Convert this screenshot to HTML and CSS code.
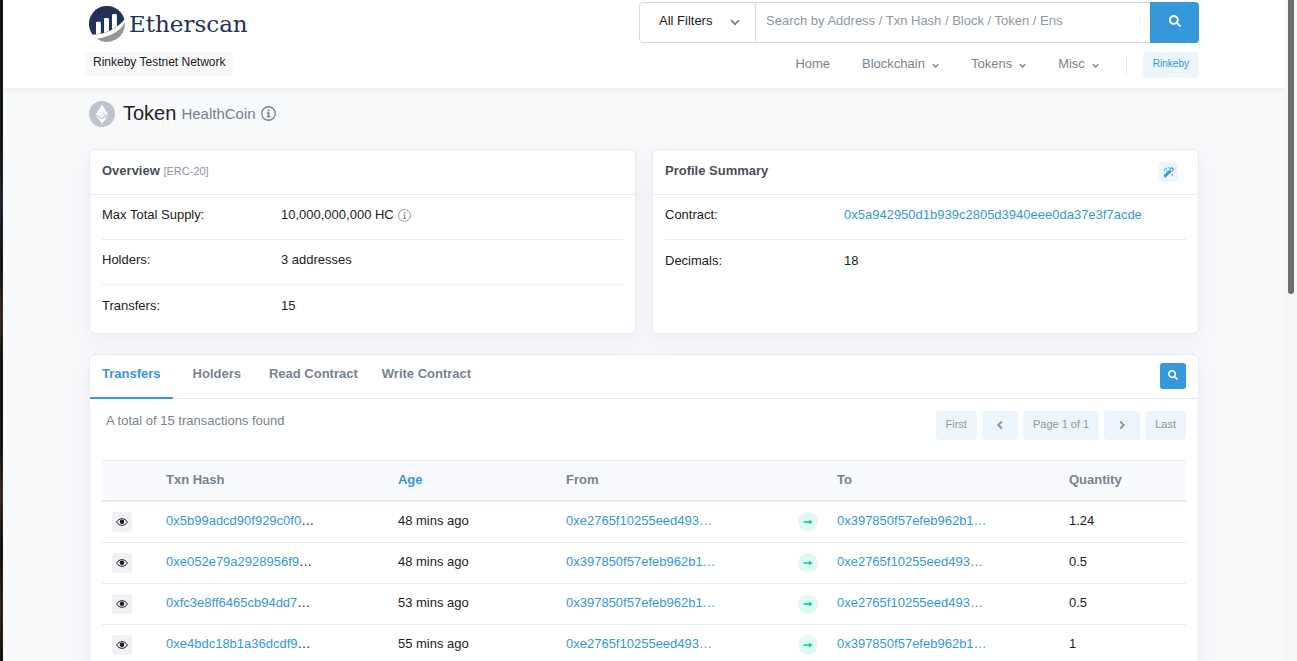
FILE: index.html
```html
<!DOCTYPE html>
<html lang="en">
  <head>
    <meta charset="UTF-8" />
    <meta name="viewport" content="width=device-width, initial-scale=1.0" />
    <title>HealthCoin (HC) Token Tracker | Etherscan</title>
    <link rel="stylesheet" href="styles.css">
  </head>
  <body>
    <!-- Shared icons -->
    <svg class="sprite" aria-hidden="true">
      <symbol id="i-search" viewBox="0 0 512 512">
        <path d="M505 442.700 405.300 343c-4.500-4.500-10.600-7-17-7H372c27.600-35.300 44-79.700 44-128C416 93.100 322.900 0 208 0S0 93.100 0 208s93.100 208 208 208c48.300 0 92.700-16.400 128-44v16.300c0 6.400 2.500 12.500 7 17l99.700 99.700c9.400 9.400 24.600 9.400 33.900 0l28.300-28.300c9.400-9.400 9.400-24.600.1-34zM208 336c-70.700 0-128-57.200-128-128 0-70.700 57.200-128 128-128 70.700 0 128 57.200 128 128 0 70.700-57.200 128-128 128z" />
      </symbol>
      <symbol id="i-down" viewBox="0 0 10 10">
        <path d="M1 3.200 5 7.200 9 3.200" fill="none" stroke="currentColor" stroke-width="1.800" />
      </symbol>
      <symbol id="i-info" viewBox="0 0 16 16">
        <circle cx="8" cy="8" r="7.200" fill="none" stroke="currentColor" stroke-width="1.400" />
        <path d="M7 3.600h2.100v2H7zM6 6.600h3.100v4.300h1v1.300H6v-1.300h1V7.900H6z" />
      </symbol>
      <symbol id="i-info-light" viewBox="0 0 16 16">
        <circle cx="8" cy="8" r="7.300" fill="none" stroke="currentColor" stroke-width="1.200" />
        <path d="M7.100 3.800h1.800v1.700H7.100zM6.200 6.700h2.700v4.500h1v1H6.200v-1h1V7.700h-1z" />
      </symbol>
      <symbol id="i-eye" viewBox="0 0 12 10">
        <path d="M.6 5C2 2.700 3.800 1.700 6 1.700S10 2.700 11.400 5C10 7.300 8.200 8.300 6 8.300S2 7.300.6 5z" fill="none" stroke="currentColor" stroke-width="1" />
        <circle cx="6" cy="4.800" r="2.300" />
      </symbol>
      <symbol id="i-arrow" viewBox="0 0 10 10">
        <path d="M.5 4.200h5.700V2.500L9.500 5 6.200 7.500V5.800H.5z" />
      </symbol>
    </svg>

    <div class="desktop-edge"></div>

    <div class="page">
      <header class="header">
        <div class="container header-inner">
          <div class="brand">
            <a class="logo" href="#">
              <svg class="logo-mark" viewBox="0 0 36 36" aria-hidden="true">
                <path d="M3.400 28.500A18 18 0 1 1 35.400 13.500C31 19 23 25 13 27.600c-3 .8-6.500 1.200-9.600.9z" fill="#21325b" />
                <path d="M7 28.400V17q0-1.300 1.300-1.300h2.300q1.300 0 1.300 1.300v10.600zM15 27V13.200q0-1.300 1.300-1.300h2.300q1.300 0 1.300 1.300V25zM23 23.500V9.400q0-1.300 1.300-1.300h2.300q1.300 0 1.300 1.300v11z" fill="#fff" />
                <path d="M7.400 32.500C20 31.500 31 25.500 35.900 16.500A18 18 0 0 1 7.400 32.500z" fill="#979695" />
              </svg>
              <span>Etherscan</span>
            </a>
            <span class="network">Rinkeby Testnet Network</span>
          </div>

          <div class="header-right">
            <form class="search">
              <div class="select-wrap">
                <select class="filter" aria-label="Search filter">
                  <option>All Filters</option>
                  <option>Addresses</option>
                  <option>Tokens</option>
                </select>
                <svg class="select-arrow"><use href="#i-down" /></svg>
              </div>
              <input class="search-input" type="text" aria-label="Search" placeholder="Search by Address / Txn Hash / Block / Token / Ens">
              <button class="search-btn" type="button" aria-label="Search"><svg><use href="#i-search" /></svg></button>
            </form>
            <nav class="nav">
              <a href="#">Home</a>
              <a href="#">Blockchain <svg><use href="#i-down" /></svg></a>
              <a href="#">Tokens <svg><use href="#i-down" /></svg></a>
              <a href="#">Misc <svg><use href="#i-down" /></svg></a>
              <span class="nav-divider"></span>
              <a class="nav-network" href="#">Rinkeby</a>
            </nav>
          </div>
        </div>
      </header>

      <main class="container">
        <h1 class="title">
          <svg class="token-icon" viewBox="0 0 26 26" aria-hidden="true">
            <circle cx="13" cy="13" r="13" fill="#bdc4cf" />
            <path d="M13 3.500 19 13.300 13 17 7 13.300z" fill="#fff" />
            <path d="M13 10.500 19 13.300 13 17z" fill="#e3e7ec" />
            <path d="M7 14.700 13 18.300l6-3.600-6 8z" fill="#fff" />
          </svg>
          Token <span class="title-name">HealthCoin</span>
          <svg class="title-info"><use href="#i-info" /></svg>
        </h1>

        <div class="summary">
          <section class="card">
            <div class="card-head">
              <h2>Overview <small>[ERC-20]</small></h2>
            </div>
            <dl class="facts">
              <div class="fact">
                <dt>Max Total Supply:</dt>
                <dd>10,000,000,000 HC <svg><use href="#i-info-light" /></svg></dd>
              </div>
              <div class="fact">
                <dt>Holders:</dt>
                <dd>3 addresses</dd>
              </div>
              <div class="fact">
                <dt>Transfers:</dt>
                <dd>15</dd>
              </div>
            </dl>
          </section>

          <section class="card">
            <div class="card-head">
              <h2>Profile Summary</h2>
              <button class="wand" type="button" aria-label="Update profile">
                <svg viewBox="0 0 12 12">
                  <path d="M.9 9 7.300 2.600l2.200 2.200L3.100 11.200q-.6.600-1.200 0L.9 10.200q-.6-.6 0-1.200z" />
                  <path d="M7.600 2.300 8.800 1.100q.5-.5 1 0l1.200 1.200q.5.500 0 1L9.800 4.500" fill="none" stroke="currentColor" stroke-width="1.200" />
                  <path d="M2.800.8h1.600v1.600H2.800zM5.600.2h1.200v1.200H5.600zM.8 2.600h1.400V4H.8zM9.400 7.600H11v1.600H9.400zM3.600 3.600h1.200v1.200H3.600z" />
                </svg>
              </button>
            </div>
            <dl class="facts">
              <div class="fact">
                <dt>Contract:</dt>
                <dd><a href="#">0x5a942950d1b939c2805d3940eee0da37e3f7acde</a></dd>
              </div>
              <div class="fact">
                <dt>Decimals:</dt>
                <dd>18</dd>
              </div>
            </dl>
          </section>
        </div>

        <section class="card">
          <div class="tabs">
            <div class="tab-group">
              <a class="tab active" href="#">Transfers</a>
              <a class="tab" href="#">Holders</a>
            </div>
            <div class="tab-group">
              <a class="tab" href="#">Read Contract</a>
              <a class="tab" href="#">Write Contract</a>
            </div>
            <button class="tab-search" type="button" aria-label="Find"><svg><use href="#i-search" /></svg></button>
          </div>

          <div class="card-body">
            <div class="toolbar">
              <p>A total of 15 transactions found</p>
              <div class="pager">
                <button type="button">First</button>
                <button class="step" type="button" aria-label="Previous"><svg viewBox="0 0 10 10"><path d="M6.800 1.500 3.300 5l3.500 3.500" /></svg></button>
                <span>Page 1 of 1</span>
                <button class="step" type="button" aria-label="Next"><svg viewBox="0 0 10 10"><path d="M3.200 1.500 6.700 5 3.200 8.500" /></svg></button>
                <button type="button">Last</button>
              </div>
            </div>

            <table class="transfers">
              <colgroup>
                <col class="col-eye"><col class="col-hash"><col class="col-age"><col class="col-hash"><col class="col-arrow"><col class="col-hash"><col>
              </colgroup>
              <thead>
                <tr>
                  <th></th>
                  <th>Txn Hash</th>
                  <th><a href="#">Age</a></th>
                  <th>From</th>
                  <th></th>
                  <th>To</th>
                  <th>Quantity</th>
                </tr>
              </thead>
              <tbody>
                <tr>
                  <td><button class="eye" type="button" aria-label="View"><svg><use href="#i-eye" /></svg></button></td>
                  <td><a href="#">0x5b99adcd90f929c0f0</a>…</td>
                  <td>48 mins ago</td>
                  <td><a href="#">0xe2765f10255eed493…</a></td>
                  <td><span class="arrow"><svg><use href="#i-arrow" /></svg></span></td>
                  <td><a href="#">0x397850f57efeb962b1…</a></td>
                  <td>1.24</td>
                </tr>
                <tr>
                  <td><button class="eye" type="button" aria-label="View"><svg><use href="#i-eye" /></svg></button></td>
                  <td><a href="#">0xe052e79a2928956f9</a>…</td>
                  <td>48 mins ago</td>
                  <td><a href="#">0x397850f57efeb962b1…</a></td>
                  <td><span class="arrow"><svg><use href="#i-arrow" /></svg></span></td>
                  <td><a href="#">0xe2765f10255eed493…</a></td>
                  <td>0.5</td>
                </tr>
                <tr>
                  <td><button class="eye" type="button" aria-label="View"><svg><use href="#i-eye" /></svg></button></td>
                  <td><a href="#">0xfc3e8ff6465cb94dd7</a>…</td>
                  <td>53 mins ago</td>
                  <td><a href="#">0x397850f57efeb962b1…</a></td>
                  <td><span class="arrow"><svg><use href="#i-arrow" /></svg></span></td>
                  <td><a href="#">0xe2765f10255eed493…</a></td>
                  <td>0.5</td>
                </tr>
                <tr>
                  <td><button class="eye" type="button" aria-label="View"><svg><use href="#i-eye" /></svg></button></td>
                  <td><a href="#">0xe4bdc18b1a36dcdf9</a>…</td>
                  <td>55 mins ago</td>
                  <td><a href="#">0xe2765f10255eed493…</a></td>
                  <td><span class="arrow"><svg><use href="#i-arrow" /></svg></span></td>
                  <td><a href="#">0x397850f57efeb962b1…</a></td>
                  <td>1</td>
                </tr>
              </tbody>
            </table>
          </div>
        </section>
      </main>
    </div>

    <div class="scrollbar"><div class="scroll-thumb"></div></div>
  </body>
</html>
```

FILE: styles.css
```css
* {
  box-sizing: border-box;
}

body {
  margin: 0;
  height: 100vh;
  overflow: hidden;
  display: flex;
  font-family: "Liberation Sans", Arial, sans-serif;
  font-size: 13px;
  line-height: 20px;
  color: #1e2022;
  background: #f8f9fb;
}

a {
  color: #3498db;
  text-decoration: none;
}

button,
input,
select {
  font: inherit;
  margin: 0;
}

button {
  border: none;
  padding: 0;
  cursor: pointer;
}

svg {
  fill: currentColor;
  flex-shrink: 0;
}

.sprite {
  position: absolute;
  width: 0;
  height: 0;
}

.desktop-edge {
  width: 3px;
  background: linear-gradient(#10160f 0, #14180f 22%, #1e2836 30%, #14140f 40%, #3a2c22 48%, #12110e 55%, #1a1510 68%, #3a2c22 75%, #14100c 83%, #33271c 92%, #14100c 100%);
}

.page {
  flex: 1;
  min-width: 0;
  overflow: hidden;
}

.scrollbar {
  width: 12px;
  padding: 0 3px;
  background: #f6f6f6;
}

.scroll-thumb {
  height: 294px;
  background: #6d6d6d;
  border-radius: 0 0 3px 3px;
}

.container {
  max-width: 1110px;
  margin: 0 auto;
}

/* Header */
.header {
  background: #fff;
  box-shadow: 0 1px 6px rgba(140, 152, 164, 0.15);
}

.header-inner {
  display: flex;
  justify-content: space-between;
  height: 88px;
}

.brand {
  display: flex;
  flex-direction: column;
  align-items: flex-start;
  gap: 10px;
  padding-top: 6px;
}

.logo {
  display: flex;
  align-items: center;
  gap: 4px;
  color: #21325b;
  font-family: "DejaVu Serif", serif;
  font-size: 23px;
  line-height: 36px;
}

.logo-mark {
  width: 36px;
  height: 36px;
}

.network {
  margin-left: -4px;
  padding: 0 8px 4px;
  border-radius: 4px;
  background: #f8f9fb;
  font-size: 12px;
}

.header-right {
  width: 560px;
  padding-top: 2px;
}

.search {
  display: flex;
  height: 41px;
}

.select-wrap {
  position: relative;
  width: 117px;
}

.filter {
  appearance: none;
  width: 100%;
  height: 100%;
  padding: 0 19px 4px;
  border: 1px solid #d5dae2;
  border-radius: 4px 0 0 4px;
  background: #fff;
  color: #1e2022;
}

.select-arrow {
  position: absolute;
  top: 15px;
  right: 16px;
  width: 10px;
  height: 10px;
  color: #77838f;
  pointer-events: none;
}

.search-input {
  flex: 1;
  min-width: 0;
  padding: 0 10px 4px;
  border: 1px solid #d5dae2;
  border-width: 1px 0;
  background: #fff;
}

.search-input::placeholder {
  color: #8c98a4;
}

.search-btn {
  width: 49px;
  background: #3498db;
  color: #fff;
  border-radius: 0 4px 4px 0;
}

.search-btn svg {
  width: 12px;
  height: 12px;
}

.nav {
  display: flex;
  align-items: center;
  justify-content: flex-end;
  margin-top: 9px;
  height: 26px;
  gap: 32px;
}

.nav a {
  display: flex;
  align-items: center;
  gap: 7px;
  padding-bottom: 2px;
  color: #77838f;
}

.nav svg {
  width: 7px;
  height: 7px;
  margin-top: 2px;
}

.nav-divider {
  width: 1px;
  height: 20px;
  margin-left: -5px;
  background: #e7eaf3;
}

.nav .nav-network {
  height: 26px;
  margin-left: -16px;
  padding: 0 10px 2px;
  border-radius: 4px;
  background: #ebf5fb;
  color: #3498db;
  font-size: 10px;
}

/* Token title */
.title {
  display: flex;
  align-items: center;
  gap: 5px;
  margin: 12px 0 22px;
  font-size: 20px;
  line-height: 27px;
  font-weight: 400;
}

.token-icon {
  width: 26px;
  height: 26px;
  margin-right: 3px;
}

.title-name {
  color: #77838f;
  font-size: 15px;
}

.title-info {
  width: 15px;
  height: 15px;
  color: #77838f;
}

/* Cards */
.card {
  background: #fff;
  border: 1px solid #e7eaf3;
  border-radius: 6px;
  box-shadow: 0 8px 20px rgba(189, 197, 209, 0.2);
}

.summary {
  display: grid;
  grid-template-columns: 1fr 1fr;
  gap: 16px;
  margin-bottom: 20px;
}

.card-head {
  display: flex;
  align-items: center;
  justify-content: space-between;
  height: 45px;
  padding: 0 20px 0 12px;
  border-bottom: 1px solid #e7eaf3;
}

.card-head h2 {
  margin: 0;
  padding-bottom: 3px;
  font-size: 13px;
  color: #4a4f55;
}

.card-head small {
  font-size: 11px;
  font-weight: 400;
  color: #8c98a4;
}

.wand {
  display: flex;
  align-items: center;
  justify-content: center;
  width: 19px;
  height: 20px;
  border-radius: 3px;
  background: #ebf5fb;
  color: #3498db;
}

.wand svg {
  width: 11px;
  height: 11px;
}

.facts {
  margin: 0;
  padding: 0 12px 3px;
}

.fact {
  display: flex;
  align-items: center;
  height: 45px;
  padding-bottom: 4px;
  border-bottom: 1px solid #e7eaf3;
}

.fact:last-child {
  border-bottom: none;
}

.fact dt {
  width: 179px;
}

.fact dd {
  display: flex;
  align-items: center;
  gap: 4px;
  margin: 0;
}

.fact svg {
  width: 13px;
  height: 13px;
  color: #8c98a4;
}

/* Tabs */
.tabs {
  display: flex;
  gap: 4px;
  height: 44px;
  padding-right: 12px;
  border-bottom: 1px solid #e7eaf3;
}

.tab-group {
  display: flex;
}

.tab {
  height: 44px;
  padding: 9px 12px 0;
  font-weight: 700;
  color: #77838f;
}

.tab.active {
  margin-right: 8px;
  border-bottom: 2px solid #3498db;
  color: #3498db;
}

.tab-search {
  width: 26px;
  height: 26px;
  margin: 8px 0 0 auto;
  border-radius: 3px;
  background: #3498db;
  color: #fff;
}

.tab-search svg {
  width: 10px;
  height: 10px;
}

.card-body {
  padding: 12px 12px 20px;
}

.toolbar {
  display: flex;
  justify-content: space-between;
  height: 49px;
}

.toolbar p {
  margin: 0 4px;
  color: #77838f;
}

.pager {
  display: flex;
  gap: 5px;
}

.pager button,
.pager span {
  height: 29px;
  padding: 0 10px 3px;
  border-radius: 4px;
  background: #ebf5fb;
  color: #8c98a4;
  font-size: 11px;
  line-height: 26px;
}

.pager .step {
  width: 36px;
}

.pager svg {
  width: 10px;
  height: 10px;
  fill: none;
  stroke: currentColor;
  stroke-width: 2;
  vertical-align: middle;
}

/* Transfers table */
.transfers {
  width: 100%;
  table-layout: fixed;
  border-collapse: separate;
  border-spacing: 0;
}

.col-eye {
  width: 52px;
}

.col-hash {
  width: 21.4%;
}

.col-age {
  width: 15.5%;
}

.col-arrow {
  width: 39px;
}

.transfers th {
  height: 42px;
  padding: 0 12px 2px;
  border-top: 1px solid #e7eaf3;
  border-bottom: 2px solid #e7eaf3;
  background: #f8fafd;
  color: #77838f;
  text-align: left;
}

.transfers td {
  height: 41px;
  padding: 0 12px 2px;
  border-bottom: 1px solid #e7eaf3;
}

.transfers td:first-child {
  padding: 0 0 0 10px;
}

.transfers td:nth-child(5) {
  padding: 0 0 0 12px;
}

.eye,
.arrow {
  display: flex;
  align-items: center;
  justify-content: center;
  width: 20px;
  height: 20px;
}

.eye {
  border-radius: 3px;
  background: #f0f1f5;
  color: #1e2022;
}

.eye svg {
  width: 12px;
  height: 10px;
}

.arrow {
  border-radius: 50%;
  background: #e0f9f4;
  color: #00c9a7;
}

.arrow svg {
  width: 10px;
  height: 10px;
}
```
